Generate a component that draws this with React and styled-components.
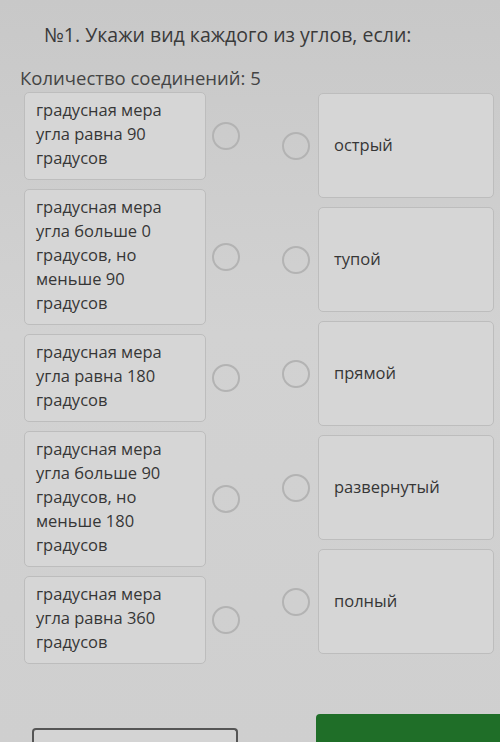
import React from 'react';
import styled, { createGlobalStyle } from 'styled-components';

const GlobalStyle = createGlobalStyle`
  html, body {
    margin: 0;
    padding: 0;
    background: #cdcdcd;
  }
  body {
    font-family: "Open Sans", "Noto Sans", sans-serif;
  }
`;

const Page = styled.div`
  width: 500px;
  height: 742px;
  overflow: hidden;
  background: linear-gradient(180deg, #c8c8c8 0%, #d2d2d2 45%, #cfcfcf 100%);
  color: #363636;
  display: flex;
  flex-direction: column;
`;

const Title = styled.h1`
  margin: 22px 0 0 44px;
  font-size: 19.5px;
  font-weight: 400;
  line-height: 26px;
  color: #3a3a3a;
  white-space: nowrap;
`;

const Counter = styled.div`
  margin: 18px 0 0 20px;
  font-size: 18.5px;
  line-height: 24px;
  color: #444;
`;

const Board = styled.div`
  display: flex;
  margin-top: 2px;
  padding-left: 24px;
`;

const Column = styled.div`
  display: flex;
  flex-direction: column;
  gap: ${({ gap }) => gap}px;
  padding-top: ${({ top = 0 }) => top}px;
`;

const Item = styled.div`
  display: flex;
  align-items: center;
`;

const Card = styled.div`
  box-sizing: border-box;
  width: ${({ width }) => width}px;
  min-height: ${({ minHeight = 0 }) => minHeight}px;
  padding: ${({ pad }) => pad};
  background: #d6d6d6;
  border: 1px solid #bdbdbd;
  border-radius: 5px;
  font-size: 16.5px;
  line-height: 24px;
  color: #363636;
  white-space: nowrap;
`;

const Dot = styled.span`
  box-sizing: border-box;
  flex: none;
  width: 28px;
  height: 28px;
  border: 2px solid #b3b3b3;
  border-radius: 50%;
  margin: ${({ m }) => m};
`;

const Footer = styled.div`
  margin-top: auto;
  display: flex;
  align-items: flex-end;
  justify-content: space-between;
  padding-left: 32px;
  height: 30px;
`;

const GhostButton = styled.div`
  box-sizing: border-box;
  width: 206px;
  height: 14px;
  border: 2px solid #555;
  border-bottom: none;
  border-radius: 4px 4px 0 0;
  background: #d4d4d4;
`;

const GreenButton = styled.div`
  width: 184px;
  height: 28px;
  background: #1f6e28;
  border-radius: 4px 0 0 0;
`;

const lefts = [
  ['градусная мера', 'угла равна 90', 'градусов'],
  ['градусная мера', 'угла больше 0', 'градусов, но', 'меньше 90', 'градусов'],
  ['градусная мера', 'угла равна 180', 'градусов'],
  ['градусная мера', 'угла больше 90', 'градусов, но', 'меньше 180', 'градусов'],
  ['градусная мера', 'угла равна 360', 'градусов'],
];

const rights = ['острый', 'тупой', 'прямой', 'развернутый', 'полный'];

export default function App() {
  return (
    <Page>
      <GlobalStyle />
      <Title>№1. Укажи вид каждого из углов, если:</Title>
      <Counter>Количество соединений: 5</Counter>
      <Board>
        <Column gap={9}>
          {lefts.map((lines, i) => (
            <Item key={i}>
              <Card width={182} pad="5px 8px 9px 11px">
                {lines.map((l) => (
                  <div key={l}>{l}</div>
                ))}
              </Card>
              <Dot m="0 0 0 6px" />
            </Item>
          ))}
        </Column>
        <Column gap={9} top={1}>
          {rights.map((t) => (
            <Item key={t}>
              <Dot m="0 8px 0 42px" />
              <Card width={176} minHeight={105} pad="39px 12px 10px 15px">
                {t}
              </Card>
            </Item>
          ))}
        </Column>
      </Board>
      <Footer>
        <GhostButton />
        <GreenButton />
      </Footer>
    </Page>
  );
}
